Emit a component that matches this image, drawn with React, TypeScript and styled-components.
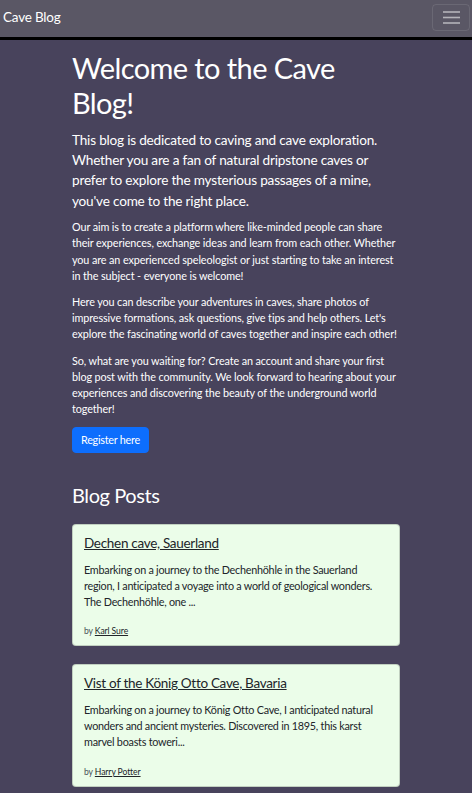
import styled, { createGlobalStyle } from 'styled-components';

const GlobalStyle = createGlobalStyle`
  body {
    margin: 0;
    background: #48435c;
    font-family: Lato, "Noto Sans", sans-serif;
    font-size: 10.8px;
    line-height: 1.5;
    letter-spacing: -0.1px;
    color: #fff;
  }
  * { box-sizing: border-box; }
`;

const Navbar = styled.nav`
  height: 40px;
  background: #5a5765;
  border-bottom: 3px solid #000;
  display: flex;
  align-items: center;
  justify-content: space-between;
  padding: 0 2px 3px 3px;
`;

const Brand = styled.a`
  color: #fff;
  font-size: 13.5px;
  letter-spacing: -0.2px;
  text-decoration: none;
`;

const Toggler = styled.button`
  width: 38px;
  height: 27px;
  background: transparent;
  border: 1px solid rgba(255, 255, 255, 0.1);
  border-radius: 4px;
  display: flex;
  align-items: center;
  justify-content: center;
  padding: 0;
`;

const Main = styled.main`
  max-width: 328px;
  margin: 0 auto;
  padding-top: 11px;
`;

const Title = styled.h1`
  font-size: 29px;
  font-weight: 400;
  line-height: 1.2;
  letter-spacing: -0.6px;
  margin: 0 0 9px;
`;

const Lead = styled.p`
  font-size: 13.6px;
  line-height: 1.5;
  letter-spacing: -0.2px;
  margin: 0 0 8px;
`;

const Text = styled.p`
  margin: 0 0 10.2px;
`;

const Button = styled.a`
  display: block;
  width: fit-content;
  margin-top: -1px;
  background: #0d6efd;
  color: #fff;
  text-decoration: none;
  border-radius: 4px;
  padding: 4px 8px;
  border: 1px solid #0d6efd;
  letter-spacing: -0.25px;
`;

const SectionTitle = styled.h2`
  font-size: 20px;
  font-weight: 400;
  line-height: 1.2;
  letter-spacing: -0.4px;
  margin: 30px 0 17px;
`;

const CardList = styled.div`
  display: flex;
  flex-direction: column;
  gap: 18px;
`;

const Card = styled.article`
  background: #ebfde9;
  color: #212529;
  border: 1px solid rgba(0, 0, 0, 0.175);
  border-radius: 4px;
  padding: 10px 11px 7px;
`;

const CardTitle = styled.a`
  display: block;
  color: #212529;
  font-size: 13.5px;
  line-height: 1.2;
  letter-spacing: -0.3px;
  text-decoration: underline;
  margin-bottom: 10.6px;
`;

const CardText = styled.p`
  margin: 0 0 15px;
  letter-spacing: -0.25px;
`;

const Meta = styled.div`
  font-size: 8.6px;
  line-height: 13px;
  letter-spacing: -0.1px;
  color: #495057;

  a {
    color: #212529;
    text-decoration: underline;
  }
`;

const posts = [
  {
    title: 'Dechen cave, Sauerland',
    text: 'Embarking on a journey to the Dechenhöhle in the Sauerland region, I anticipated a voyage into a world of geological wonders. The Dechenhöhle, one ...',
    author: 'Karl Sure',
  },
  {
    title: 'Vist of the König Otto Cave, Bavaria',
    text: 'Embarking on a journey to König Otto Cave, I anticipated natural wonders and ancient mysteries. Discovered in 1895, this karst marvel boasts toweri...',
    author: 'Harry Potter',
  },
];

const App = () => {
  return (
    <>
      <GlobalStyle />
      <Navbar>
        <Brand href="#">Cave Blog</Brand>
        <Toggler aria-label="Toggle navigation">
          <svg width="17" height="13" viewBox="0 0 17 13">
            <g stroke="rgba(255,255,255,0.55)" strokeWidth="1.6">
              <line x1="0" y1="1" x2="17" y2="1" />
              <line x1="0" y1="6.5" x2="17" y2="6.5" />
              <line x1="0" y1="12" x2="17" y2="12" />
            </g>
          </svg>
        </Toggler>
      </Navbar>
      <Main>
        <Title>Welcome to the Cave Blog!</Title>
        <Lead>
          This blog is dedicated to caving and cave exploration. Whether you are a fan of natural
          dripstone caves or prefer to explore the mysterious passages of a mine, you've come to the
          right place.
        </Lead>
        <Text>
          Our aim is to create a platform where like-minded people can share their experiences,
          exchange ideas and learn from each other. Whether you are an experienced speleologist or
          just starting to take an interest in the subject - everyone is welcome!
        </Text>
        <Text>
          Here you can describe your adventures in caves, share photos of impressive formations, ask
          questions, give tips and help others. Let's explore the fascinating world of caves
          together and inspire each other!
        </Text>
        <Text>
          So, what are you waiting for? Create an account and share your first blog post with the
          community. We look forward to hearing about your experiences and discovering the beauty of
          the underground world together!
        </Text>
        <Button href="#">Register here</Button>
        <SectionTitle>Blog Posts</SectionTitle>
        <CardList>
          {posts.map((p) => (
            <Card key={p.title}>
              <CardTitle href="#">{p.title}</CardTitle>
              <CardText>{p.text}</CardText>
              <Meta>
                by <a href="#">{p.author}</a>
              </Meta>
            </Card>
          ))}
        </CardList>
      </Main>
    </>
  );
};

export default App;
